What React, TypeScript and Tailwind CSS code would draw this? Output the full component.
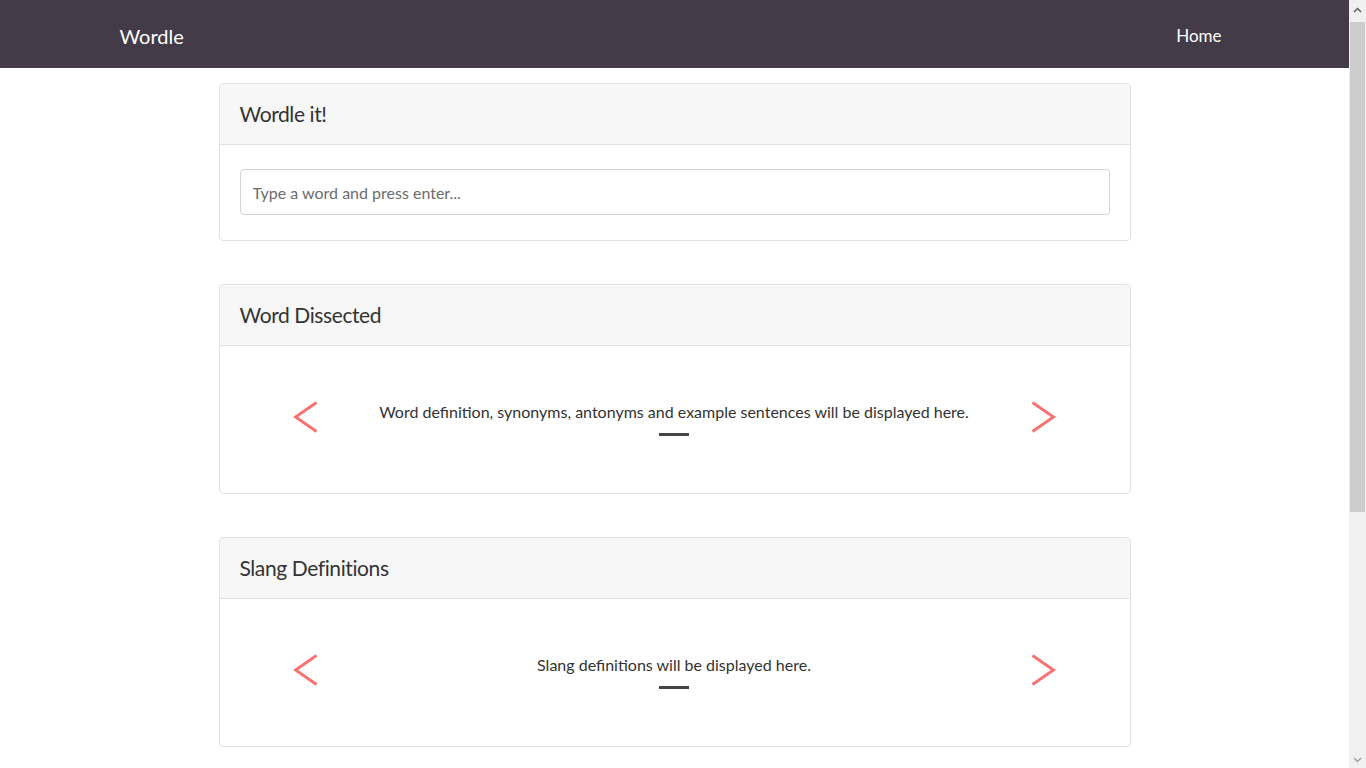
import React from "react";

function Arrow({ dir }: { dir: "left" | "right" }) {
  return (
    <svg width="25" height="32" viewBox="0 0 25 32" className="shrink-0">
      {dir === "left" ? (
        <polyline points="23.5,1.5 2.5,16 23.5,30.5" fill="none" stroke="#f87272" strokeWidth="3" />
      ) : (
        <polyline points="1.5,1.5 22.5,16 1.5,30.5" fill="none" stroke="#f87272" strokeWidth="3" />
      )}
    </svg>
  );
}

function Card({ title, children }: { title: string; children: React.ReactNode }) {
  return (
    <div className="rounded border border-[#e2e2e2] bg-white">
      <div className="h-[61px] flex items-center px-5 bg-[#f7f7f7] border-b border-[#e2e2e2] rounded-t">
        <h2 className="text-[21px] tracking-[-0.4px] text-[#333]">{title}</h2>
      </div>
      {children}
    </div>
  );
}

function Carousel({ text }: { text: string }) {
  return (
    <div className="h-[147px] flex items-center justify-between pl-[73px] pr-[74px] pb-[5px]">
      <Arrow dir="left" />
      <div className="flex flex-col items-center pt-[1px]">
        <p className="text-[16px] text-[#333]">{text}</p>
        <span className="mt-[9px] block w-[30px] h-[3px] bg-[#444]" />
      </div>
      <Arrow dir="right" />
    </div>
  );
}

function Scrollbar() {
  return (
    <div className="sticky top-0 w-[17px] h-[768px] shrink-0 bg-[#f0f0f0] flex flex-col">
      <div className="h-[20px] flex items-center justify-center bg-[#f0f0f0]">
        <svg width="9" height="6" viewBox="0 0 9 6">
          <polyline points="1,5 4.5,1.5 8,5" fill="none" stroke="#606060" strokeWidth="1.5" />
        </svg>
      </div>
      <div className="mx-[1px] mt-[2px] h-[490px] bg-[#cdcdcd]" />
      <div className="flex-1" />
      <div className="h-[17px] flex items-center justify-center">
        <svg width="9" height="6" viewBox="0 0 9 6">
          <polyline points="1,1 4.5,4.5 8,1" fill="none" stroke="#a0a0a0" strokeWidth="1.5" />
        </svg>
      </div>
    </div>
  );
}

export default function App() {
  return (
    <div className="flex items-start bg-white font-['Lato',sans-serif]">
      <div className="w-[1349px] min-h-[1100px] shrink-0">
        <nav className="h-[68px] bg-[#433c48]">
          <div className="w-[1140px] mx-auto px-[15px] pt-[4px] h-full flex items-center justify-between">
            <span className="text-[20px] text-white">Wordle</span>
            <a className="text-[17px] text-white px-2">Home</a>
          </div>
        </nav>
        <main className="w-[912px] mx-auto pt-[15px] flex flex-col gap-[43px]">
          <Card title="Wordle it!">
            <div className="px-5 pt-6 pb-[25px]">
              <input
                type="text"
                placeholder="Type a word and press enter..."
                className="w-full h-[46px] rounded border border-[#ced4da] px-3 text-[16px] text-[#555] placeholder:text-[#6c6c6c] outline-none"
              />
            </div>
          </Card>
          <Card title="Word Dissected">
            <Carousel text="Word definition, synonyms, antonyms and example sentences will be displayed here." />
          </Card>
          <Card title="Slang Definitions">
            <Carousel text="Slang definitions will be displayed here." />
          </Card>
        </main>
      </div>
      <Scrollbar />
    </div>
  );
}
